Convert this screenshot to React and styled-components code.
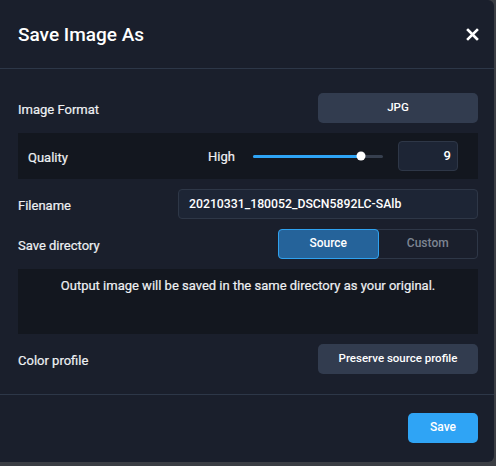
import React from "react"
import styled, { createGlobalStyle } from "styled-components"

const Global = createGlobalStyle`
  html, body {
    margin: 0;
    padding: 0;
    background: #3b3e44;
  }
  body {
    font-family: Roboto, "Liberation Sans", sans-serif;
    -webkit-font-smoothing: antialiased;
  }
  * { box-sizing: border-box; }
`

export default function App() {
  return (
    <>
      <Global />
      <Dialog>
        <Header>
          <Title>Save Image As</Title>
          <Close aria-label="Close">
            <svg width="13" height="13" viewBox="0 0 13 13">
              <path d="M2 2 L11 11 M11 2 L2 11" stroke="#ffffff" strokeWidth="2.6" strokeLinecap="square" />
            </svg>
          </Close>
        </Header>
        <Body>
          <Row>
            <Label>Image Format</Label>
            <Button>JPG</Button>
          </Row>
          <QualityRow>
            <Label>Quality</Label>
            <SliderGroup>
              <Level>High</Level>
              <Track>
                <Fill style={{ width: `${(108 / 130) * 100}%` }} />
                <Thumb style={{ left: `${(108 / 130) * 100}%` }} />
              </Track>
              <NumberBox>9</NumberBox>
            </SliderGroup>
          </QualityRow>
          <Row>
            <Label>Filename</Label>
            <TextInput>20210331_180052_DSCN5892LC-SAlb</TextInput>
          </Row>
          <Row>
            <Label>Save directory</Label>
            <Toggle>
              <ToggleOption $active>Source</ToggleOption>
              <ToggleOption>Custom</ToggleOption>
            </Toggle>
          </Row>
          <Info>Output image will be saved in the same directory as your original.</Info>
          <Row>
            <Label>Color profile</Label>
            <Button>Preserve source profile</Button>
          </Row>
        </Body>
        <Footer>
          <SaveButton>Save</SaveButton>
        </Footer>
      </Dialog>
    </>
  )
}

const Dialog = styled.div`
  width: 494px;
  background: #1a1f2c;
  border-radius: 0 6px 6px 0;
  color: #eef0f3;
  overflow: hidden;
`

const Header = styled.div`
  display: flex;
  align-items: center;
  justify-content: space-between;
  height: 69px;
  padding: 0 15px 0 18px;
  border-bottom: 1px solid #2d3748;
`

const Title = styled.h2`
  margin: 0;
  font-size: 19px;
  font-weight: 500;
  color: #ffffff;
`

const Close = styled.div`
  display: flex;
  width: 13px;
  height: 13px;
`

const Body = styled.div`
  display: flex;
  flex-direction: column;
  gap: 10px;
  padding: 24px 16px 20px 18px;
  border-bottom: 1px solid #2d3748;
`

const Row = styled.div`
  display: flex;
  align-items: center;
  justify-content: space-between;
  min-height: 30px;
`

const Label = styled.span`
  font-size: 13px;
  font-weight: 400;
  color: #eef0f3;
  padding-top: 2px;
  -webkit-text-stroke: 0.2px #eef0f3;
`

const Button = styled.div`
  display: flex;
  align-items: center;
  justify-content: center;
  width: 160px;
  height: 30px;
  background: #323c4f;
  border-radius: 5px;
  font-size: 11.5px;
  font-weight: 500;
  color: #ffffff;
  padding-bottom: 2px;
`

const QualityRow = styled(Row)`
  background: #13171f;
  padding: 8px 20px 8px 10px;
`

const SliderGroup = styled.div`
  display: flex;
  align-items: center;
`

const Level = styled.span`
  font-size: 13px;
  font-weight: 400;
  color: #eef0f3;
  margin-right: 18px;
  -webkit-text-stroke: 0.2px #eef0f3;
`

const Track = styled.div`
  position: relative;
  width: 130px;
  height: 3px;
  background: #363f4e;
  border-radius: 2px;
  margin-right: 15px;
`

const Fill = styled.div`
  height: 100%;
  background: #2ea4f5;
  border-radius: 2px;
`

const Thumb = styled.div`
  position: absolute;
  top: 50%;
  width: 9px;
  height: 9px;
  border-radius: 50%;
  background: #ffffff;
  transform: translate(-50%, -50%);
`

const NumberBox = styled.div`
  display: flex;
  align-items: center;
  justify-content: flex-end;
  width: 60px;
  height: 30px;
  padding: 0 6px 1px 0;
  background: #1d2535;
  border: 1px solid #2e3747;
  border-radius: 4px;
  font-size: 13px;
  font-weight: 500;
  color: #ffffff;
`

const TextInput = styled.div`
  display: flex;
  align-items: center;
  width: 300px;
  height: 30px;
  padding: 0 10px 1px;
  background: #1d2535;
  border: 1px solid #2e3747;
  border-radius: 4px;
  font-size: 12.25px;
  font-weight: 500;
  color: #ffffff;
`

const Toggle = styled.div`
  display: flex;
  width: 200px;
  height: 30px;
  border: 1px solid #2e3747;
  border-radius: 4px;
`

const ToggleOption = styled.div`
  flex: 1;
  display: flex;
  align-items: center;
  justify-content: center;
  margin: ${p => (p.$active ? "-1px 0 -1px -1px" : "0")};
  background: ${p => (p.$active ? "#25639a" : "transparent")};
  border: ${p => (p.$active ? "1px solid #2fa2f0" : "none")};
  border-radius: 4px;
  font-size: 12px;
  font-weight: 500;
  color: ${p => (p.$active ? "#ffffff" : "#7d8592")};
  padding-bottom: 2px;
`

const Info = styled.div`
  height: 65px;
  padding-top: 9px;
  background: #13171f;
  text-align: center;
  font-size: 13px;
  font-weight: 400;
  color: #eef0f3;
  -webkit-text-stroke: 0.2px #eef0f3;
`

const Footer = styled.div`
  display: flex;
  justify-content: flex-end;
  padding: 18px 16px 19px;
`

const SaveButton = styled.div`
  display: flex;
  align-items: center;
  justify-content: center;
  width: 70px;
  height: 30px;
  background: #2fa4f5;
  border-radius: 5px;
  font-size: 12px;
  font-weight: 500;
  color: #ffffff;
  padding-bottom: 2px;
`
